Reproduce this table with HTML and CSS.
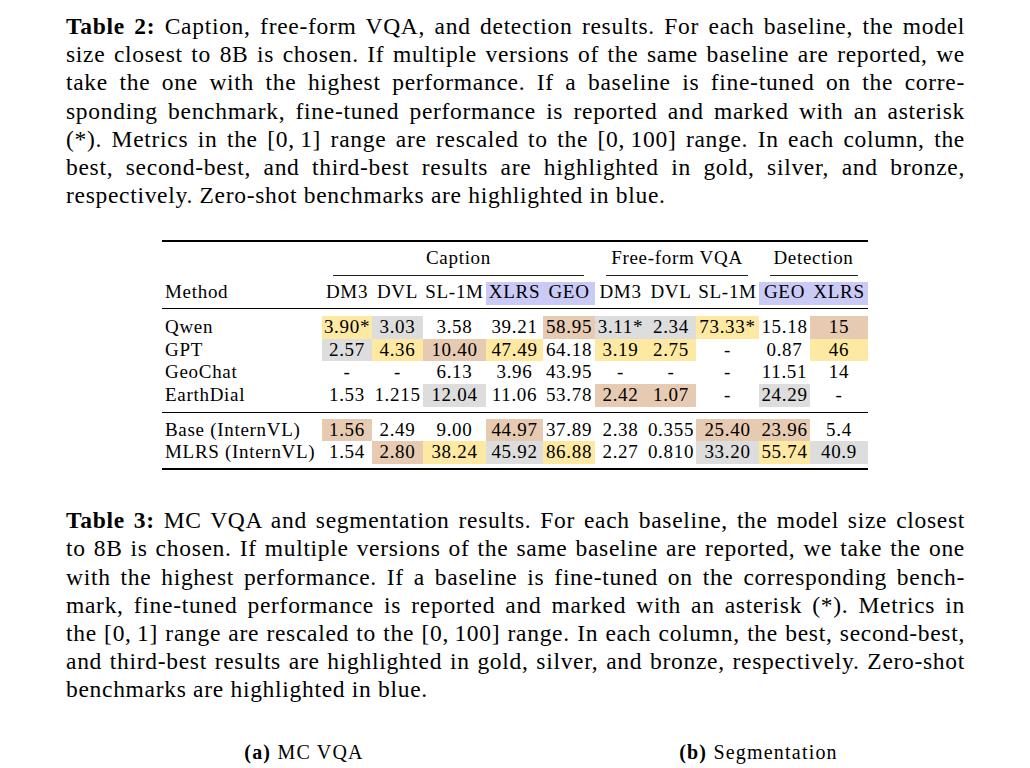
FILE: index.html
```html
<!DOCTYPE html>
<html>
<head>
<meta charset="utf-8">
<link rel="stylesheet" href="styles.css">
</head>
<body>
<div class="page">
  <p class="caption cap2">
    <span class="ln"><b>Table 2:</b> Caption, free-form VQA, and detection results. For each baseline, the model</span>
    <span class="ln">size closest to 8B is chosen. If multiple versions of the same baseline are reported, we</span>
    <span class="ln">take the one with the highest performance. If a baseline is fine-tuned on the corre-</span>
    <span class="ln">sponding benchmark, fine-tuned performance is reported and marked with an asterisk</span>
    <span class="ln">(*). Metrics in the [0,&#8201;1] range are rescaled to the [0,&#8201;100] range. In each column, the</span>
    <span class="ln">best, second-best, and third-best results are highlighted in gold, silver, and bronze,</span>
    <span class="ln last">respectively. Zero-shot benchmarks are highlighted in blue.</span>
  </p>

  <div class="tbl">
    <div class="rule heavy top"></div>
    <div class="grp">
      <div class="gcell g-cap"><div class="gt">Caption</div><div class="cmid"></div></div>
      <div class="gcell g-vqa"><div class="gt">Free-form VQA</div><div class="cmid"></div></div>
      <div class="gcell g-det"><div class="gt">Detection</div><div class="cmid"></div></div>
    </div>
    <div class="row head">
      <div class="c m">Method</div>
      <div class="c">DM3</div><div class="c">DVL</div><div class="c">SL-1M</div>
      <div class="c z">XLRS</div><div class="c z">GEO</div>
      <div class="c">DM3</div><div class="c">DVL</div><div class="c">SL-1M</div>
      <div class="c z">GEO</div><div class="c z">XLRS</div>
    </div>
    <div class="rule mid"></div>
    <div class="blk b1">
      <div class="row">
        <div class="c m">Qwen</div>
        <div class="c au">3.90*</div><div class="c ag">3.03</div><div class="c">3.58</div>
        <div class="c">39.21</div><div class="c cu">58.95</div>
        <div class="c ag">3.11*</div><div class="c ag">2.34</div><div class="c au">73.33*</div>
        <div class="c">15.18</div><div class="c cu">15</div>
      </div>
      <div class="row">
        <div class="c m">GPT</div>
        <div class="c ag">2.57</div><div class="c au">4.36</div><div class="c cu">10.40</div>
        <div class="c au">47.49</div><div class="c">64.18</div>
        <div class="c au">3.19</div><div class="c au">2.75</div><div class="c">-</div>
        <div class="c">0.87</div><div class="c au">46</div>
      </div>
      <div class="row">
        <div class="c m">GeoChat</div>
        <div class="c">-</div><div class="c">-</div><div class="c">6.13</div>
        <div class="c">3.96</div><div class="c">43.95</div>
        <div class="c">-</div><div class="c">-</div><div class="c">-</div>
        <div class="c">11.51</div><div class="c">14</div>
      </div>
      <div class="row">
        <div class="c m">EarthDial</div>
        <div class="c">1.53</div><div class="c">1.215</div><div class="c ag">12.04</div>
        <div class="c">11.06</div><div class="c">53.78</div>
        <div class="c cu">2.42</div><div class="c cu">1.07</div><div class="c">-</div>
        <div class="c ag">24.29</div><div class="c">-</div>
      </div>
    </div>
    <div class="rule mid2"></div>
    <div class="blk b2">
      <div class="row r2">
        <div class="c m">Base (InternVL)</div>
        <div class="c cu">1.56</div><div class="c">2.49</div><div class="c">9.00</div>
        <div class="c cu">44.97</div><div class="c">37.89</div>
        <div class="c">2.38</div><div class="c">0.355</div><div class="c cu">25.40</div>
        <div class="c cu">23.96</div><div class="c">5.4</div>
      </div>
      <div class="row r2">
        <div class="c m">MLRS (InternVL)</div>
        <div class="c">1.54</div><div class="c cu">2.80</div><div class="c au">38.24</div>
        <div class="c ag">45.92</div><div class="c au">86.88</div>
        <div class="c">2.27</div><div class="c">0.810</div><div class="c ag">33.20</div>
        <div class="c au">55.74</div><div class="c ag">40.9</div>
      </div>
    </div>
    <div class="rule heavy bottom"></div>
  </div>

  <p class="caption cap3">
    <span class="ln"><b>Table 3:</b> MC VQA and segmentation results. For each baseline, the model size closest</span>
    <span class="ln">to 8B is chosen. If multiple versions of the same baseline are reported, we take the one</span>
    <span class="ln">with the highest performance. If a baseline is fine-tuned on the corresponding bench-</span>
    <span class="ln">mark, fine-tuned performance is reported and marked with an asterisk (*). Metrics in</span>
    <span class="ln">the [0,&#8201;1] range are rescaled to the [0,&#8201;100] range. In each column, the best, second-best,</span>
    <span class="ln">and third-best results are highlighted in gold, silver, and bronze, respectively. Zero-shot</span>
    <span class="ln last">benchmarks are highlighted in blue.</span>
  </p>

  <div class="subcaps">
    <div class="sub sub-a"><b>(a)</b> MC VQA</div>
    <div class="sub sub-b"><b>(b)</b> Segmentation</div>
  </div>
</div>
</body>
</html>
```

FILE: styles.css
```css
html, body {
  margin: 0;
  padding: 0;
  background: #ffffff;
}

body {
  color: #000000;
  font-family: "Liberation Serif", "Times New Roman", serif;
  overflow: hidden;
}

.page {
  padding: 12px 0 0 66px;
  width: 899px;
}

.caption {
  margin: 0;
  font-size: 23.5px;
  line-height: 28.2px;
  letter-spacing: 0.7px;
}

.caption .ln {
  display: block;
  white-space: nowrap;
  text-align: justify;
  text-align-last: justify;
}

.caption .ln.last {
  text-align: left;
  text-align-last: left;
}

.caption b {
  font-weight: bold;
}

/* ---------- table ---------- */
.tbl {
  margin: 30.6px 0 0 96px;
  width: 706px;
  font-size: 19px;
  letter-spacing: 0.7px;
  --cols: 160px 50px 51px 63px 57px 52px 51px 50px 63px 51px 58px;
}

.rule {
  background: #000000;
  height: 1px;
}

.rule.heavy {
  height: 2px;
}

.rule.mid {
  margin-top: 3.5px;
}

.rule.mid2 {
  margin-top: 5px;
}

.rule.bottom {
  margin-top: 4.2px;
}

.grp {
  display: grid;
  grid-template-columns: var(--cols);
  margin-top: 7px;
}

.gcell .gt {
  text-align: center;
  line-height: 18.5px;
  padding-bottom: 4px;
}

.gcell .cmid {
  height: 1px;
  background: #222222;
  margin: 3.5px 11px 0 11px;
}

.g-cap {
  grid-column: 2 / 7;
}

.g-vqa {
  grid-column: 7 / 10;
}

.g-det {
  grid-column: 10 / 12;
}

.g-det .cmid {
  margin-right: 10px;
}

.row {
  display: grid;
  grid-template-columns: var(--cols);
  height: 22.7px;
}

.row.r2 {
  height: 22.4px;
}

.row.head {
  margin-top: 6px;
  height: 22.5px;
}

.c {
  text-align: center;
  line-height: 18.6px;
  padding-top: 2px;
  padding-bottom: 2px;
  white-space: nowrap;
}

.head .c {
  padding-top: 1px;
  padding-bottom: 3px;
}

.c.m {
  text-align: left;
  padding-left: 3px;
}

.blk.b1 {
  margin-top: 7px;
}

.blk.b2 {
  margin-top: 6px;
}

.au {
  background: #fde9a1;
}

.ag {
  background: #dddddd;
}

.cu {
  background: #e6cab1;
}

.z {
  background: #cacaf7;
}

/* ---------- table 3 caption ---------- */
.cap3 {
  margin-top: 36.5px;
}

.subcaps {
  display: grid;
  grid-template-columns: 476px 433px;
  margin-top: 36px;
  font-size: 20px;
  line-height: 24px;
  letter-spacing: 1.2px;
}

.sub {
  text-align: center;
}
```
